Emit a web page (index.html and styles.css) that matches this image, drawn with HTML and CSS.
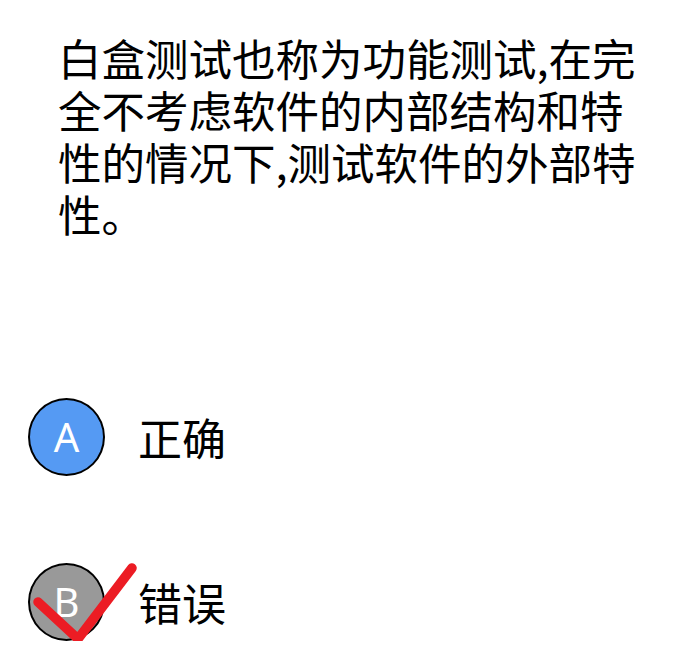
FILE: index.html
```html
<!DOCTYPE html>
<html lang="zh-CN">
<head>
<meta charset="utf-8">
<link rel="stylesheet" href="styles.css">
</head>
<body>
<div class="page">
  <p class="question">白盒测试也称为功能测试,在完全不考虑软件的内部结构和特性的情况下,测试软件的外部特性。</p>
  <div class="options">
    <div class="option">
      <span class="badge badge-a">A</span>
      <span class="label">正确</span>
    </div>
    <div class="option">
      <span class="badge badge-b">B</span>
      <span class="label">错误</span>
      <svg class="check" width="120" height="85" viewBox="0 0 120 85">
        <polyline points="10,39 50,76 104,5" fill="none" stroke="#ec1c24" stroke-width="9.5" stroke-linecap="round" stroke-linejoin="round"/>
      </svg>
    </div>
  </div>
</div>
</body>
</html>
```
FILE: styles.css
```css
html, body {
  margin: 0;
  padding: 0;
  background: #ffffff;
}
.page {
  font-family: "Noto Sans CJK SC", "Noto Sans", sans-serif;
  color: #000;
}
.question {
  margin: 0;
  padding: 32px 0 0 58px;
  width: 600px;
  font-size: 43.5px;
  line-height: 52px;
}
.options {
  display: flex;
  flex-direction: column;
  gap: 87px;
  padding: 158px 0 0 28px;
}
.option {
  position: relative;
  display: flex;
  align-items: center;
  gap: 33px;
}
.badge {
  box-sizing: border-box;
  width: 77px;
  height: 78px;
  border: 2px solid #000;
  border-radius: 50%;
  display: flex;
  align-items: center;
  justify-content: center;
  color: #fff;
  font-family: "Noto Sans", sans-serif;
  font-size: 40px;
  line-height: 1;
}
.badge-a { background: #559af3; }
.badge-b { background: #999999; }
.label {
  font-size: 44px;
  line-height: 52px;
}
.check {
  position: absolute;
  left: 0;
  top: 0;
  overflow: visible;
}
```
